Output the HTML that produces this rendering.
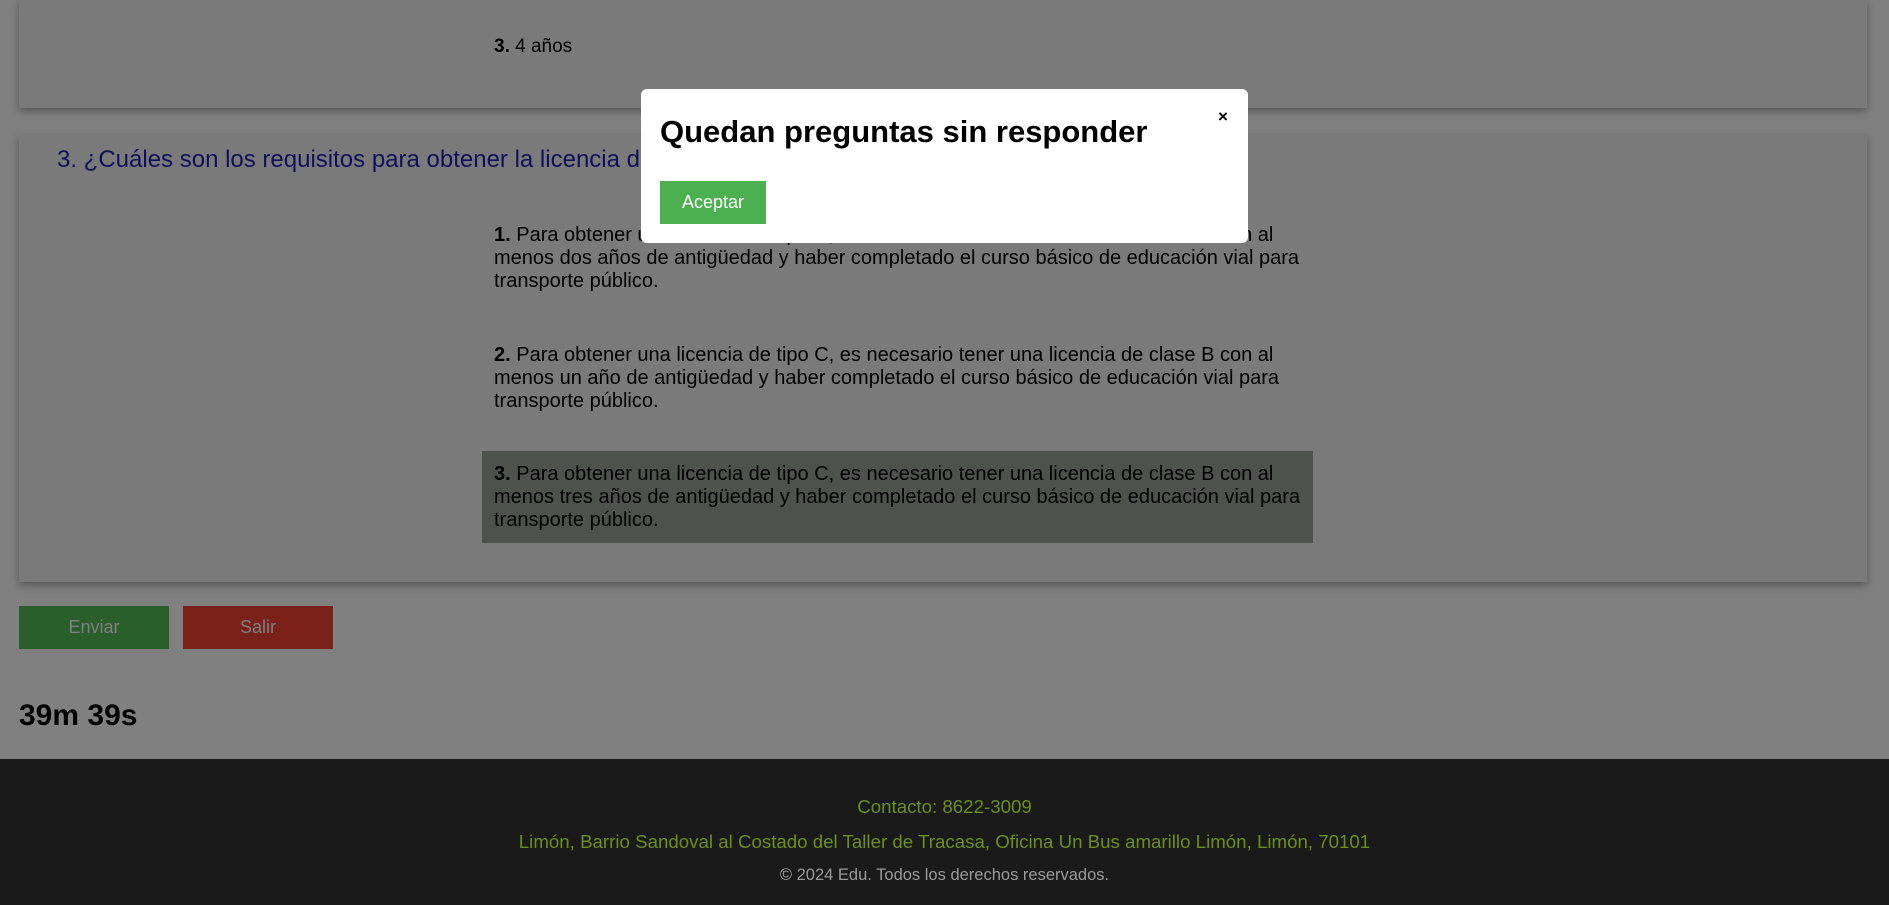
<!DOCTYPE html>
<html><head><meta charset="utf-8"><style>
*{margin:0;padding:0;box-sizing:border-box}
body{width:1889px;height:905px;overflow:hidden;background:#808080;font-family:"Liberation Sans",Arial,sans-serif;position:relative;color:#000}
.card{position:absolute;left:19px;width:1848px;background:#7a7a7a;box-shadow:0 3px 8px rgba(0,0,0,0.35)}
.t{position:absolute;font-size:19px;line-height:23px;color:#000}
.opt{position:absolute;left:482px;width:831px;padding:8px 12px;font-size:20px;line-height:23px;white-space:nowrap}
.btn{position:absolute;top:606px;height:43px;width:150px;color:#808080;font-size:18px;display:flex;align-items:center;justify-content:center}
.f{position:absolute;left:0;width:1889px;text-align:center;font-size:18.7px}
</style></head><body>
<div class="card" style="top:0;height:108px"></div>
<div class="t" style="left:494px;top:35px"><b>3.</b> 4 años</div>
<div class="card" style="top:135px;height:447px"></div>
<div class="t" style="left:57px;top:146px;font-size:24px;line-height:28px;color:#10105a">3. ¿Cuáles son los requisitos para obtener la licencia de tipo C?</div>
<div class="opt" style="top:216px"><b>1.</b> Para obtener una licencia de tipo C, es necesario tener una licencia de clase B con al<br>menos dos años de antigüedad y haber completado el curso básico de educación vial para<br>transporte público.</div>
<div class="opt" style="top:336px"><b>2.</b> Para obtener una licencia de tipo C, es necesario tener una licencia de clase B con al<br>menos un año de antigüedad y haber completado el curso básico de educación vial para<br>transporte público.</div>
<div class="opt" style="top:451px;height:92px;background:#4d524d;padding-top:12px"><b>3.</b> Para obtener una licencia de tipo C, es necesario tener una licencia de clase B con al<br>menos tres años de antigüedad y haber completado el curso básico de educación vial para<br>transporte público.</div>
<div class="btn" style="left:19px;background:#2a5f2c">Enviar</div>
<div class="btn" style="left:183px;background:#7a2119">Salir</div>
<div style="position:absolute;left:19px;top:698px;font-size:30px;font-weight:bold;line-height:35px">39m 39s</div>
<div style="position:absolute;left:0;top:759px;width:1889px;height:146px;background:#1a1a1a"></div>
<div class="f" style="top:796px;color:#6b8f1d">Contacto: 8622-3009</div>
<div class="f" style="top:831px;color:#6b8f1d">Limón, Barrio Sandoval al Costado del Taller de Tracasa, Oficina Un Bus amarillo Limón, Limón, 70101</div>
<div class="f" style="top:866px;color:#9a9a9a;font-size:16.5px">© 2024 Edu. Todos los derechos reservados.</div>
<div style="position:absolute;left:641px;top:89px;width:607px;height:154px;background:#fff;border-radius:6px">
<div style="position:absolute;left:19px;top:24px;font-size:31px;font-weight:bold;line-height:38px">Quedan preguntas sin responder</div>
<div style="position:absolute;left:577px;top:18px;font-size:17px;font-weight:bold">×</div>
<div style="position:absolute;left:19px;top:92px;width:106px;height:43px;background:#4caf50;color:#fff;font-size:18px;display:flex;align-items:center;justify-content:center">Aceptar</div>
</div>
</body></html>
